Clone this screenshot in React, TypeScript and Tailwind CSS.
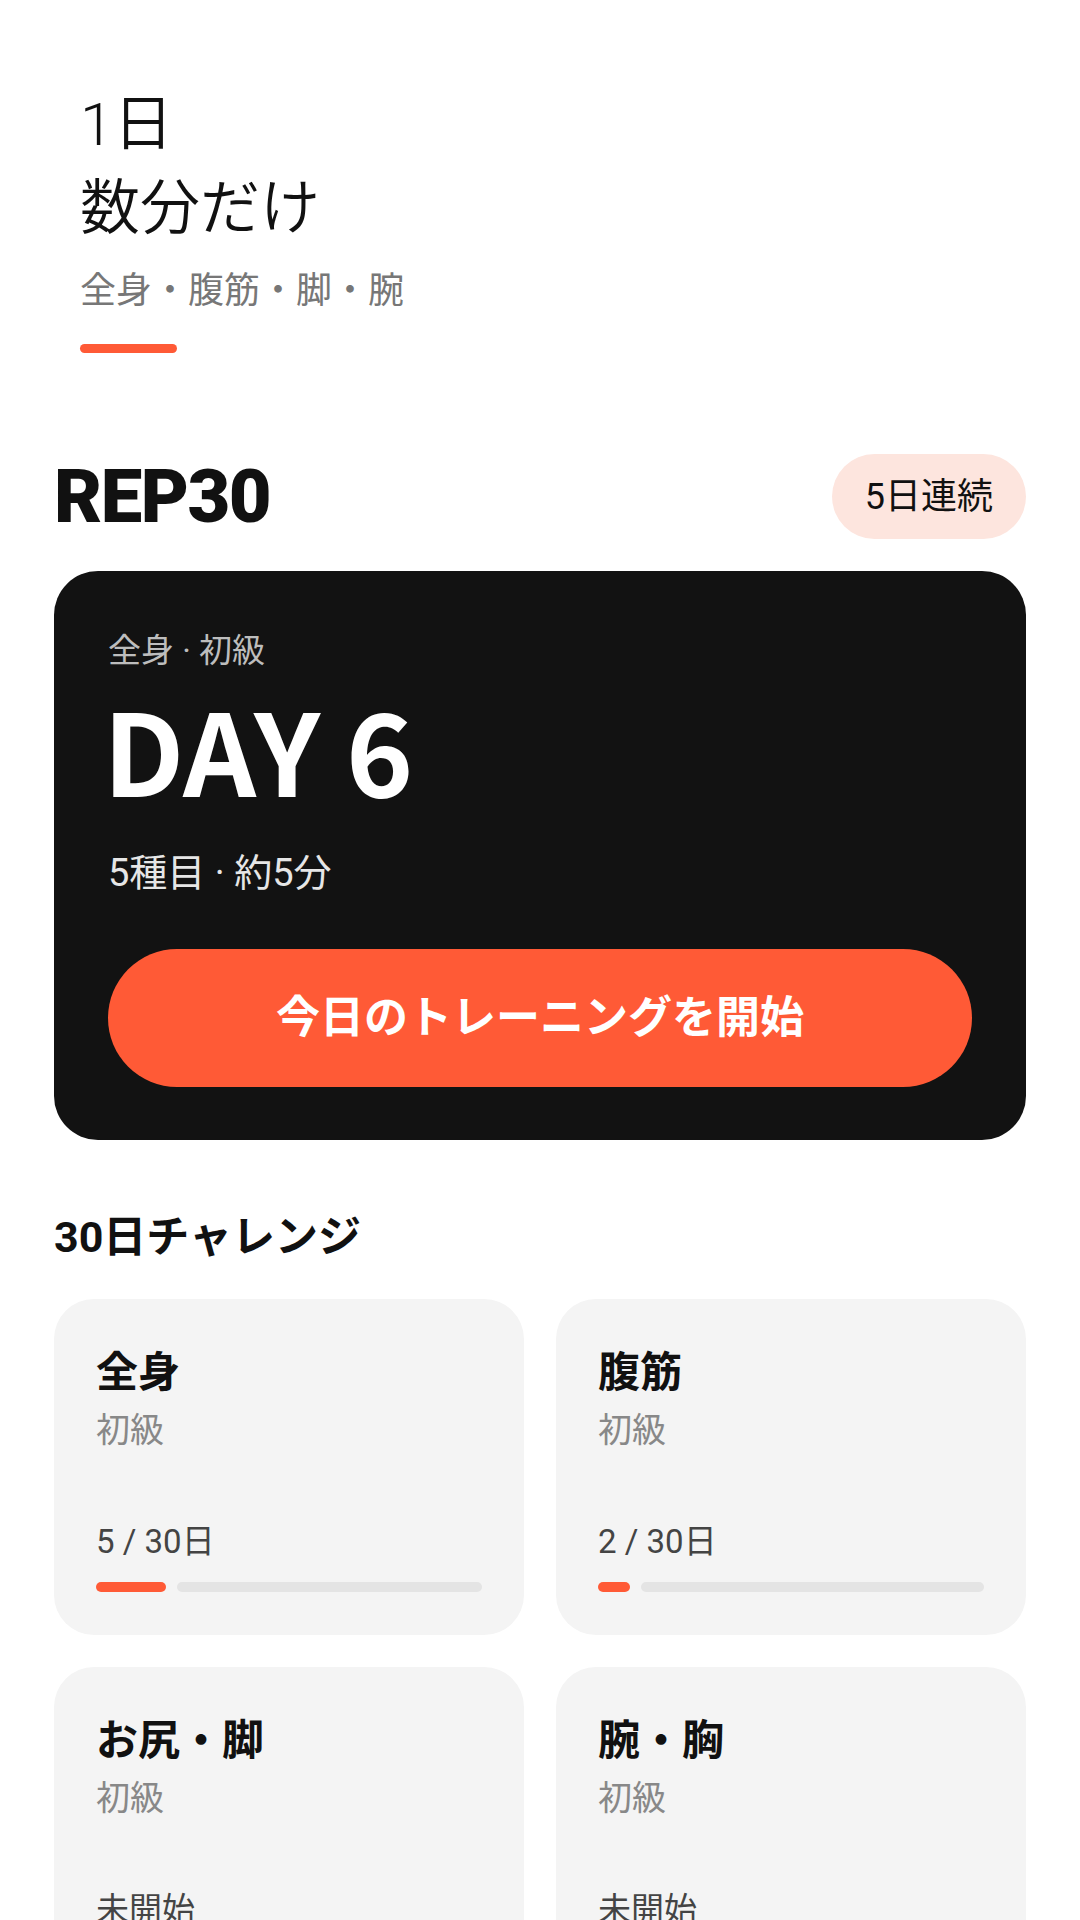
const challenges = [
  { title: '全身', level: '初級', done: 5 },
  { title: '腹筋', level: '初級', done: 2 },
  { title: 'お尻・脚', level: '初級', done: 0 },
  { title: '腕・胸', level: '初級', done: 0 },
];

function ChallengeCard({ title, level, done }: { title: string; level: string; done: number }) {
  const pct = (done / 30) * 100;
  return (
    <div className="flex h-[336px] flex-col rounded-[40px] bg-[#f4f4f4] px-[42px] pt-[48px] pb-[43px]">
      <div className="text-[42px] leading-[52px] font-bold text-[#111]">{title}</div>
      <div className="mt-[9px] text-[34px] leading-[44px] text-[#888]">{level}</div>
      <div className="mt-auto text-[33px] leading-[42px] text-[#444]">
        {done > 0 ? `${done} / 30日` : '未開始'}
      </div>
      <div className="mt-[19px] flex h-[10px] gap-[11px]">
        {done > 0 && (
          <div className="h-full rounded-full bg-[#ff5a36]" style={{ width: `calc(${pct}% + 6px)` }} />
        )}
        <div className="h-full flex-1 rounded-full bg-[#e4e4e4]" />
      </div>
    </div>
  );
}

export default function App() {
  return (
    <div className="min-h-[1920px] w-[1080px] bg-white px-[54px] pt-[83px] font-[family-name:Roboto,'Noto_Sans_CJK_JP',sans-serif] text-[#111]">
      {/* Header copy */}
      <div className="pl-[26px]">
        <h1 className="text-[60px] leading-[84px] font-[350] text-[#111]">
          1日
          <br />
          数分だけ
        </h1>
        <p className="mt-[15px] text-[36px] leading-[50px] text-[#777]">全身・腹筋・脚・腕</p>
        <div className="mt-[28px] h-[9px] w-[97px] rounded-full bg-[#ff5a36]" />
      </div>

      {/* Brand row */}
      <div className="mt-[101px] flex items-center justify-between">
        <div className="text-[74px] leading-none font-black tracking-[-0.02em] text-[#111]">REP30</div>
        <div className="flex h-[85px] items-center rounded-full bg-[#fde5de] px-[33px] text-[36px] font-normal text-[#111]">
          5日連続
        </div>
      </div>

      {/* Today card */}
      <div className="mt-[32px] rounded-[44px] bg-[#121212] px-[54px] pt-[57px] pb-[53px]">
        <div className="text-[33px] leading-[46px] text-[#bdbdbd]">全身 · 初級</div>
        <div className="-ml-[5px] mt-[14px] font-['Noto_Sans_CJK_JP'] text-[114px] leading-[120px] font-bold text-white">
          DAY 6
        </div>
        <div className="mt-[40px] text-[38px] leading-[50px] text-[#e6e6e6]">5種目 · 約5分</div>
        <button className="mt-[51px] flex h-[138px] w-full items-center justify-center rounded-full bg-[#ff5a36] text-[44px] font-bold text-white">
          今日のトレーニングを開始
        </button>
      </div>

      {/* Challenges */}
      <h2 className="mt-[69px] text-[43px] leading-[56px] font-bold text-[#111]">30日チャレンジ</h2>
      <div className="mt-[34px] grid grid-cols-2 gap-[32px]">
        {challenges.map((c) => (
          <ChallengeCard key={c.title} {...c} />
        ))}
      </div>
    </div>
  );
}
